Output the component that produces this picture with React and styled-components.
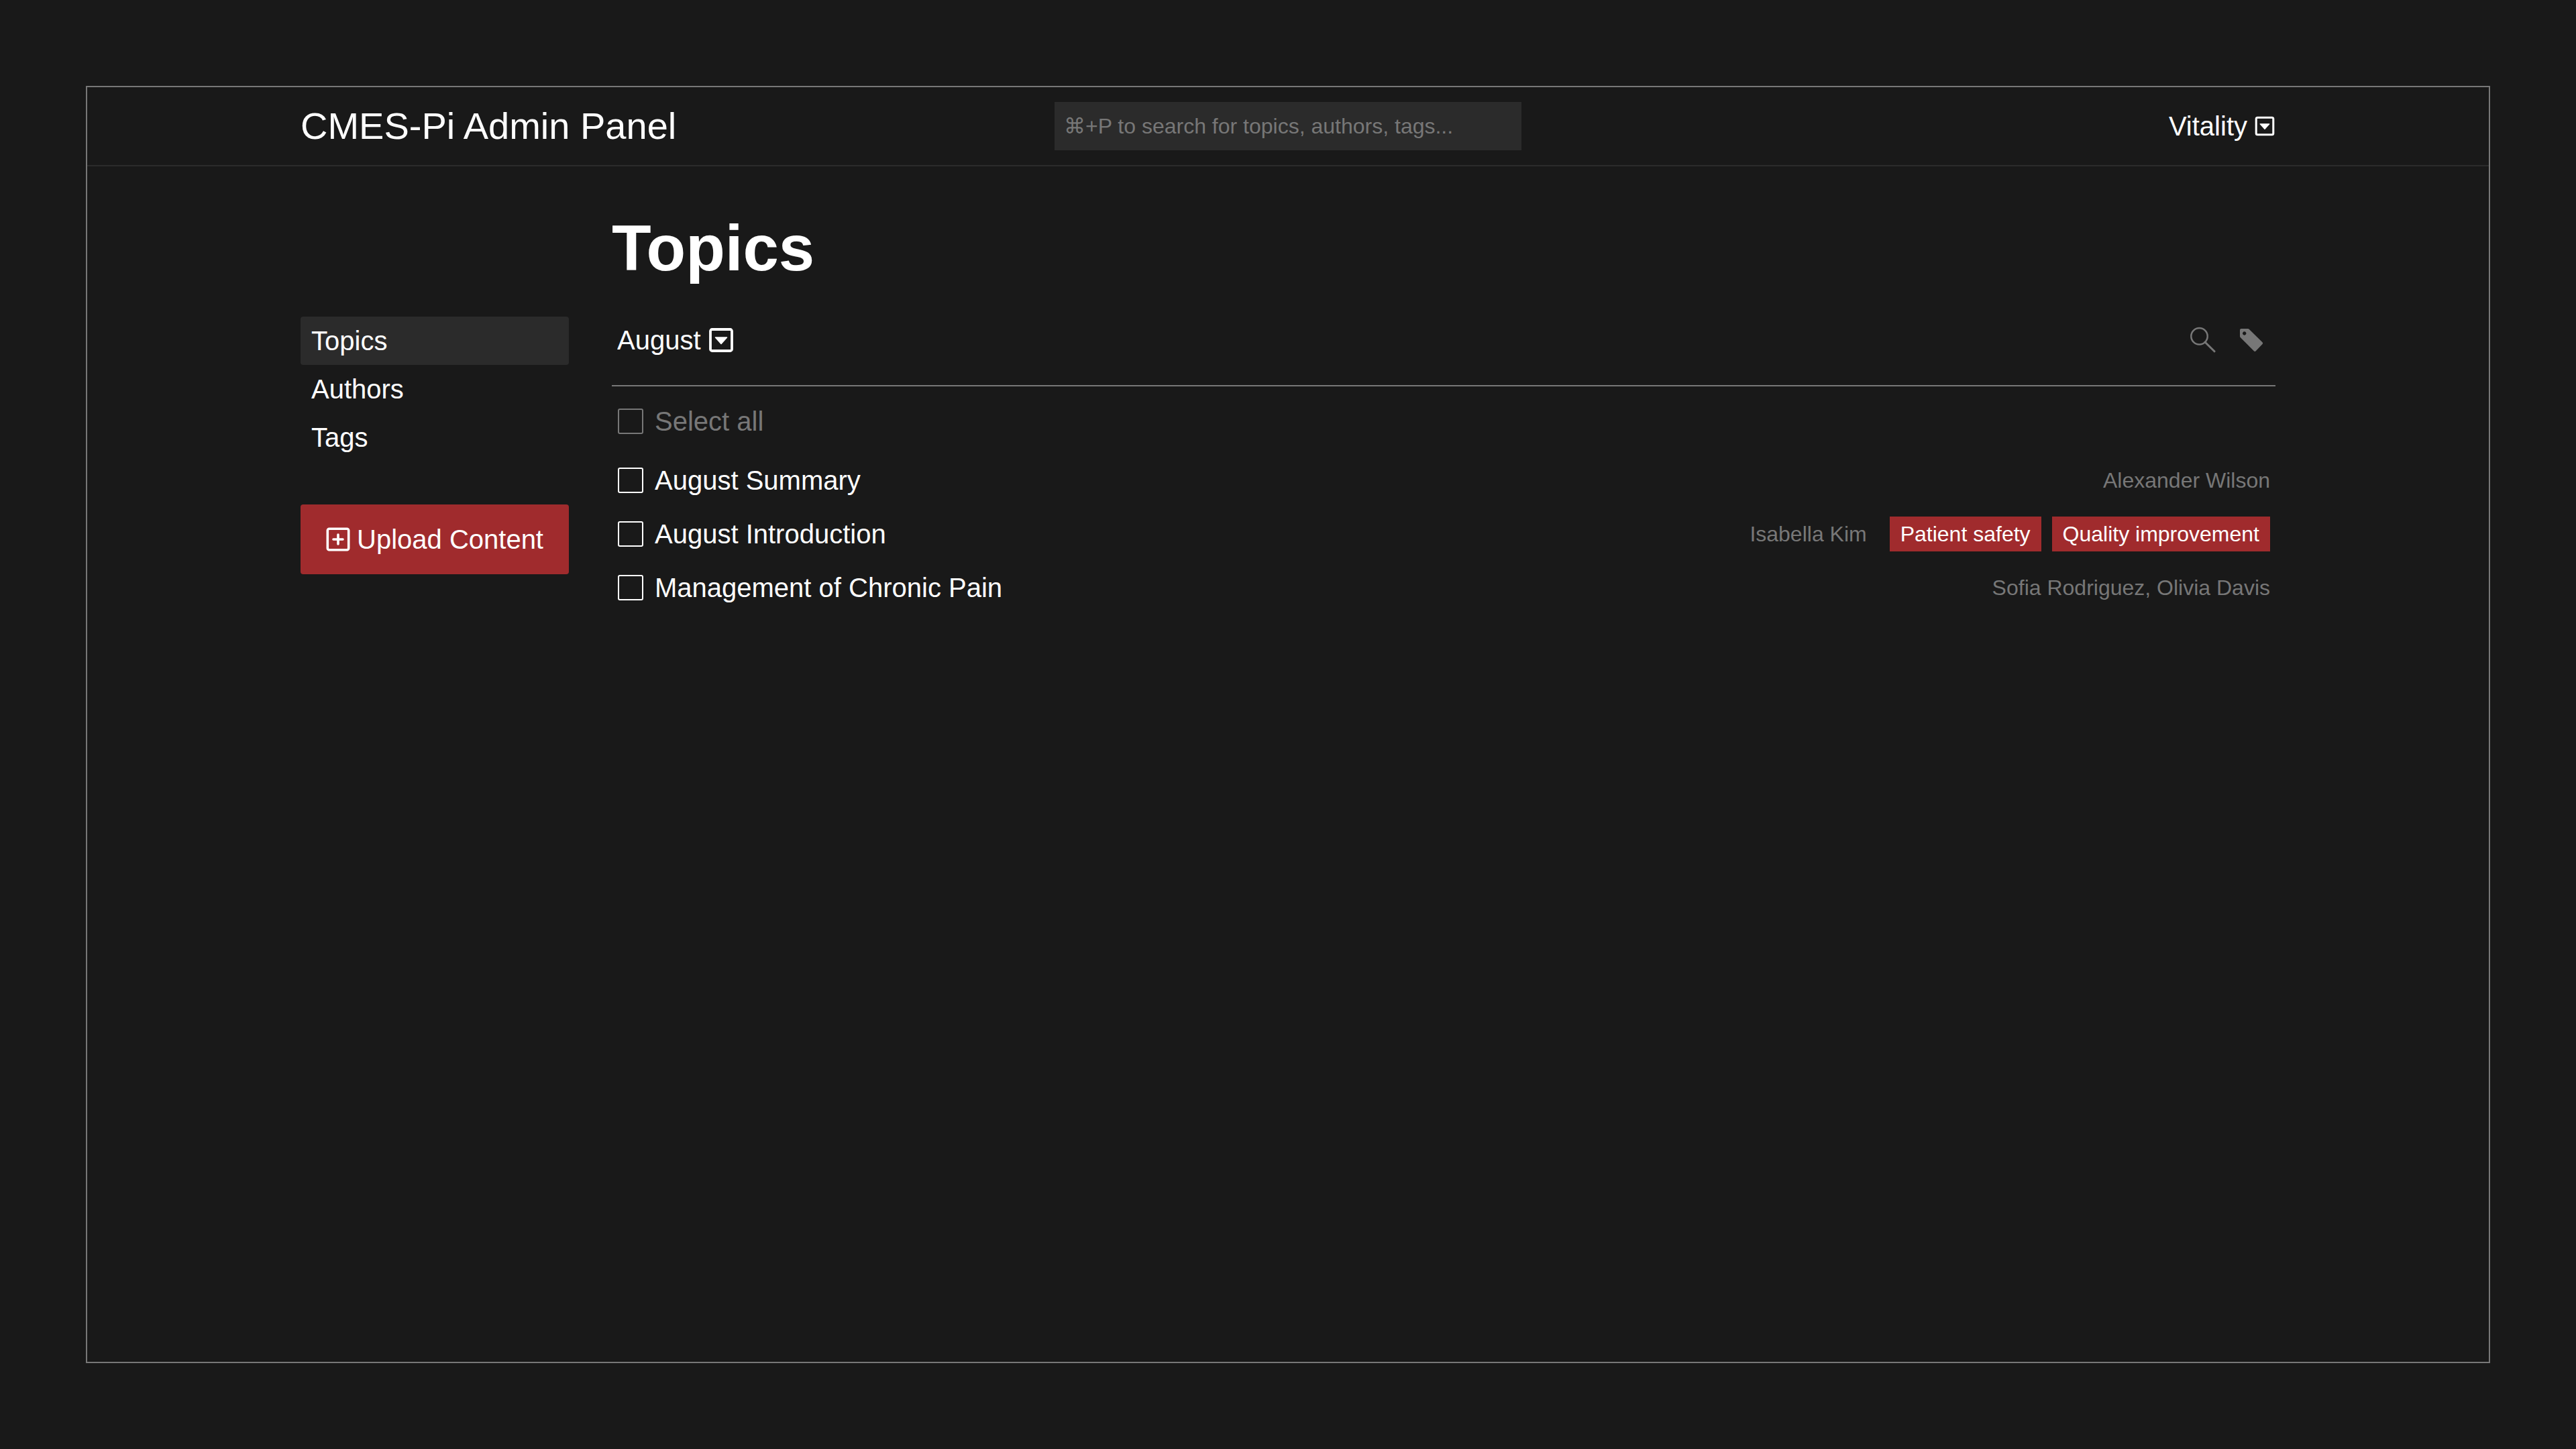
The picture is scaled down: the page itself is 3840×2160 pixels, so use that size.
import React from "react";
import styled, { createGlobalStyle, css } from "styled-components";

const color = {
  bg: "#191919",
  surface: "#2b2b2b",
  muted: "#777777",
  text: "#ffffff",
  accent: "#a02b2d",
};

const GlobalStyle = createGlobalStyle`
  *, *::before, *::after { box-sizing: border-box; }
  body {
    margin: 0;
    background: ${color.bg};
    color: ${color.text};
    font-family: "Liberation Sans", Arial, sans-serif;
    font-size: 40px;
    line-height: 48px;
  }
  button, input, select { font: inherit; color: inherit; }
`;

const Page = styled.div`
  min-height: 100vh;
  padding: 128px;
  display: flex;
`;

const Frame = styled.div`
  flex: 1;
  border: 2px solid ${color.muted};
`;

const Header = styled.header`
  display: grid;
  grid-template-columns: 1fr 696px 1fr;
  align-items: center;
  padding: 22px 318px;
  border-bottom: 2px solid ${color.surface};
`;

const Brand = styled.div`
  font-size: 56px;
  line-height: 72px;
`;

const Search = styled.input`
  width: 100%;
  height: 72px;
  padding: 0 14px;
  border: 0;
  border-radius: 0;
  outline: none;
  background: ${color.surface};
  font-size: 32px;
  &::placeholder {
    color: ${color.muted};
    opacity: 1;
  }
`;

const plainButton = css`
  display: flex;
  align-items: center;
  padding: 0;
  border: 0;
  background: none;
  cursor: pointer;
`;

const UserMenu = styled.button`
  ${plainButton}
  justify-self: end;
  gap: 10px;
`;

const Body = styled.div`
  display: grid;
  grid-template-columns: 400px 1fr;
  column-gap: 64px;
  padding: 64px 318px;
`;

const Title = styled.h1`
  grid-column: 2;
  margin: 0 0 44px;
  font-size: 96px;
  line-height: 116px;
  font-weight: 700;
`;

const Sidebar = styled.aside`
  grid-column: 1;
  display: flex;
  flex-direction: column;
  gap: 64px;
`;

const Nav = styled.nav`
  display: flex;
  flex-direction: column;
`;

const NavLink = styled.a`
  padding: 12px 16px;
  border-radius: 4px;
  color: ${color.text};
  text-decoration: none;
  background: ${(p) => (p.$active ? color.surface : "transparent")};
`;

const UploadButton = styled.button`
  ${plainButton}
  justify-content: center;
  gap: 10px;
  height: 104px;
  border-radius: 4px;
  background: ${color.accent};
`;

const Toolbar = styled.div`
  display: flex;
  align-items: center;
  justify-content: space-between;
  height: 104px;
  padding: 0 16px 32px 8px;
  border-bottom: 2px solid ${color.muted};
`;

const MonthPicker = styled.label`
  display: flex;
  align-items: center;
  gap: 10px;
`;

const MonthSelect = styled.select`
  appearance: none;
  field-sizing: content;
  padding: 0;
  border: 0;
  outline: none;
  background: ${color.bg};
`;

const Actions = styled.div`
  display: flex;
  gap: 32px;
`;

const IconButton = styled.button`
  ${plainButton}
  color: ${color.muted};
`;

const SelectAll = styled.label`
  display: flex;
  align-items: center;
  gap: 16px;
  height: 80px;
  margin: 12px 0 8px;
  padding: 0 8px;
  color: ${color.muted};
`;

const List = styled.ul`
  margin: 0;
  padding: 0;
  list-style: none;
`;

const Row = styled.li`
  display: flex;
  align-items: center;
  justify-content: space-between;
  height: 80px;
  padding: 0 8px;
`;

const RowLabel = styled.label`
  display: flex;
  align-items: center;
  gap: 16px;
`;

const Checkbox = styled.input`
  appearance: none;
  width: 38px;
  height: 38px;
  margin: 1px;
  border: 2px solid currentColor;
  border-radius: 3px;
  &:checked {
    background: currentColor;
  }
`;

const Meta = styled.div`
  display: flex;
  align-items: center;
  gap: 34px;
  font-size: 32px;
  line-height: 36px;
  color: ${color.muted};
`;

const Tags = styled.div`
  display: flex;
  gap: 16px;
`;

const Tag = styled.span`
  padding: 8px 16px;
  background: ${color.accent};
  color: ${color.text};
`;

const BoxedCaret = ({ size }) => (
  <svg width={size} height={size} viewBox="0 0 40 40" fill="none" aria-hidden="true">
    <rect x="4" y="4" width="32" height="32" rx="2.5" stroke="currentColor" strokeWidth="3.8" />
    <path d="M11.5 16h17L20 25.500z" fill="currentColor" stroke="currentColor" strokeWidth="1.500" strokeLinejoin="round" />
  </svg>
);

const BoxedPlus = () => (
  <svg width="36" height="36" viewBox="0 0 36 36" fill="none" stroke="currentColor" strokeWidth="3.6" strokeLinecap="round" aria-hidden="true">
    <rect x="2.300" y="2.300" width="31.400" height="31.400" rx="2.500" />
    <path d="M18 11v14M11 18h14" />
  </svg>
);

const SearchIcon = () => (
  <svg width="40" height="40" viewBox="0 0 40 40" fill="none" stroke="currentColor" aria-hidden="true">
    <circle cx="14.500" cy="14.300" r="12.200" strokeWidth="2.500" />
    <path d="M23 23L37 36.800" strokeWidth="3" strokeLinecap="round" />
  </svg>
);

const TagIcon = () => (
  <svg width="40" height="40" viewBox="0 0 40 40" aria-hidden="true">
    <path
      fill="currentColor"
      fillRule="evenodd"
      d="M5 3h10q1 0 1.700.7L36.500 23.200q1.300 1.400 0 2.800l-9.800 10.300q-1.400 1.300-2.800 0L3.700 16Q3 15.300 3 14.300V5q0-2 2-2zM9.700 7.300a2.700 2.700 0 1 0 .001 0z"
    />
  </svg>
);

const navItems = ["Topics", "Authors", "Tags"];

const topics = [
  { title: "August Summary", authors: "Alexander Wilson", tags: [] },
  { title: "August Introduction", authors: "Isabella Kim", tags: ["Patient safety", "Quality improvement"] },
  { title: "Management of Chronic Pain", authors: "Sofia Rodriguez, Olivia Davis", tags: [] },
];

export default function App() {
  return (
    <>
      <GlobalStyle />
      <Page>
        <Frame>
          <Header>
            <Brand>CMES-Pi Admin Panel</Brand>
            <Search type="search" aria-label="Search" placeholder="⌘+P to search for topics, authors, tags..." />
            <UserMenu type="button" aria-haspopup="menu">
              Vitality
              <BoxedCaret size={32} />
            </UserMenu>
          </Header>
          <Body>
            <Title>Topics</Title>
            <Sidebar>
              <Nav>
                {navItems.map((item) => (
                  <NavLink key={item} href={`#${item.toLowerCase()}`} $active={item === "Topics"}>
                    {item}
                  </NavLink>
                ))}
              </Nav>
              <UploadButton type="button">
                <BoxedPlus />
                Upload Content
              </UploadButton>
            </Sidebar>
            <main>
              <Toolbar>
                <MonthPicker>
                  <MonthSelect aria-label="Month" defaultValue="August">
                    <option>August</option>
                  </MonthSelect>
                  <BoxedCaret size={40} />
                </MonthPicker>
                <Actions>
                  <IconButton type="button" aria-label="Search topics">
                    <SearchIcon />
                  </IconButton>
                  <IconButton type="button" aria-label="Tag topics">
                    <TagIcon />
                  </IconButton>
                </Actions>
              </Toolbar>
              <SelectAll>
                <Checkbox type="checkbox" />
                Select all
              </SelectAll>
              <List>
                {topics.map((topic) => (
                  <Row key={topic.title}>
                    <RowLabel>
                      <Checkbox type="checkbox" />
                      {topic.title}
                    </RowLabel>
                    <Meta>
                      {topic.authors}
                      {topic.tags.length > 0 && (
                        <Tags>
                          {topic.tags.map((tag) => (
                            <Tag key={tag}>{tag}</Tag>
                          ))}
                        </Tags>
                      )}
                    </Meta>
                  </Row>
                ))}
              </List>
            </main>
          </Body>
        </Frame>
      </Page>
    </>
  );
}
